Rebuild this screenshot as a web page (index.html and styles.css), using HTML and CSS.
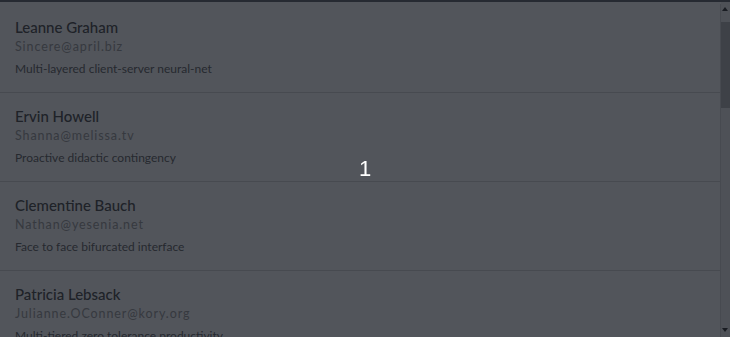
FILE: index.html
```html
<!DOCTYPE html>
<html lang="en">
<head>
  <meta charset="UTF-8" />
  <meta name="viewport" content="width=device-width, initial-scale=1.0" />
  <title>Users</title>
  <link rel="stylesheet" href="styles.css">
</head>
<body>
  <div class="topbar"></div>

  <div class="main">
    <div class="list">
      <div class="user">
        <h3>Leanne Graham</h3>
        <div class="email">Sincere@april.biz</div>
        <p>Multi-layered client-server neural-net</p>
      </div>
      <div class="user">
        <h3>Ervin Howell</h3>
        <div class="email">Shanna@melissa.tv</div>
        <p>Proactive didactic contingency</p>
      </div>
      <div class="user">
        <h3>Clementine Bauch</h3>
        <div class="email">Nathan@yesenia.net</div>
        <p>Face to face bifurcated interface</p>
      </div>
      <div class="user">
        <h3>Patricia Lebsack</h3>
        <div class="email">Julianne.OConner@kory.org</div>
        <p>Multi-tiered zero tolerance productivity</p>
      </div>
      <div class="user">
        <h3>Chelsey Dietrich</h3>
        <div class="email">Lucio_Hettinger@annie.ca</div>
        <p>User-centric fault-tolerant solution</p>
      </div>
      <div class="user">
        <h3>Mrs. Dennis Schulist</h3>
        <div class="email">Karley_Dach@jasper.info</div>
        <p>Synchronised bottom-line interface</p>
      </div>
      <div class="user">
        <h3>Kurtis Weissnat</h3>
        <div class="email">Telly.Hoeger@billy.biz</div>
        <p>Configurable multimedia task-force</p>
      </div>
      <div class="user">
        <h3>Nicholas Runolfsdottir V</h3>
        <div class="email">Sherwood@rosamond.me</div>
        <p>Implemented secondary concept</p>
      </div>
      <div class="user">
        <h3>Glenna Reichert</h3>
        <div class="email">Chaim_McDermott@dana.io</div>
        <p>Switchable contextually-based project</p>
      </div>
      <div class="user">
        <h3>Clementina DuBuque</h3>
        <div class="email">Rey.Padberg@karina.biz</div>
        <p>Centralized empowering task-force</p>
      </div>
    </div>

    <!-- scrollbar of the list -->
    <div class="scrollbar">
      <div class="sb-btn up"></div>
      <div class="sb-thumb"></div>
      <div class="sb-rest"></div>
      <div class="sb-btn down"></div>
    </div>
  </div>

  <!-- modal backdrop -->
  <div class="overlay">
    <div class="modal">1</div>
  </div>
</body>
</html>
```

FILE: styles.css
```css
* {
  margin: 0;
  padding: 0;
  box-sizing: border-box;
}
html, body {
  height: 100%;
}
body {
  background: #fff;
  font-family: Lato, "Open Sans", sans-serif;
  display: flex;
  flex-direction: column;
  overflow: hidden;
}
.topbar {
  height: 2px;
  flex: none;
  background: #777b7f;
}
.main {
  flex: 1;
  display: flex;
  min-height: 0;
}
.list {
  flex: 1;
  overflow: hidden;
  padding-top: 2px;
}
.user {
  padding: 12px 14px 14px 15px;
  border-bottom: 1px solid #dedede;
  border-right: 1px solid #dedede;
}
.user h3 {
  font-size: 15px;
  font-weight: 500;
  line-height: 22px;
  color: #626262;
}
.email {
  font-size: 12.5px;
  line-height: 18px;
  letter-spacing: 0.9px;
  color: #a9a9a9;
}
.user p {
  font-size: 12px;
  line-height: 18px;
  margin-top: 4px;
  color: #777;
}
.scrollbar {
  width: 9px;
  flex: none;
  display: flex;
  flex-direction: column;
  background: #f1f1f1;
}
.sb-btn {
  position: relative;
  flex: none;
}
.sb-btn::after {
  content: '';
  position: absolute;
  left: 1px;
  border-left: 3.5px solid transparent;
  border-right: 3.5px solid transparent;
}
.sb-btn.up {
  height: 20px;
}
.sb-btn.up::after {
  top: 5px;
  border-bottom: 4px solid #505050;
}
.sb-btn.down {
  height: 14px;
}
.sb-btn.down::after {
  top: 5px;
  border-top: 4px solid #505050;
}
.sb-thumb {
  height: 86px;
  background: #c1c1c1;
}
.sb-rest {
  flex: 1;
}
.overlay {
  position: fixed;
  inset: 0;
  background: rgba(0, 4, 14, 0.68);
  display: flex;
  align-items: center;
  justify-content: center;
}
.modal {
  color: #fff;
  font-family: "Liberation Sans", Arial, sans-serif;
  font-size: 22px;
  line-height: 1;
}
```
